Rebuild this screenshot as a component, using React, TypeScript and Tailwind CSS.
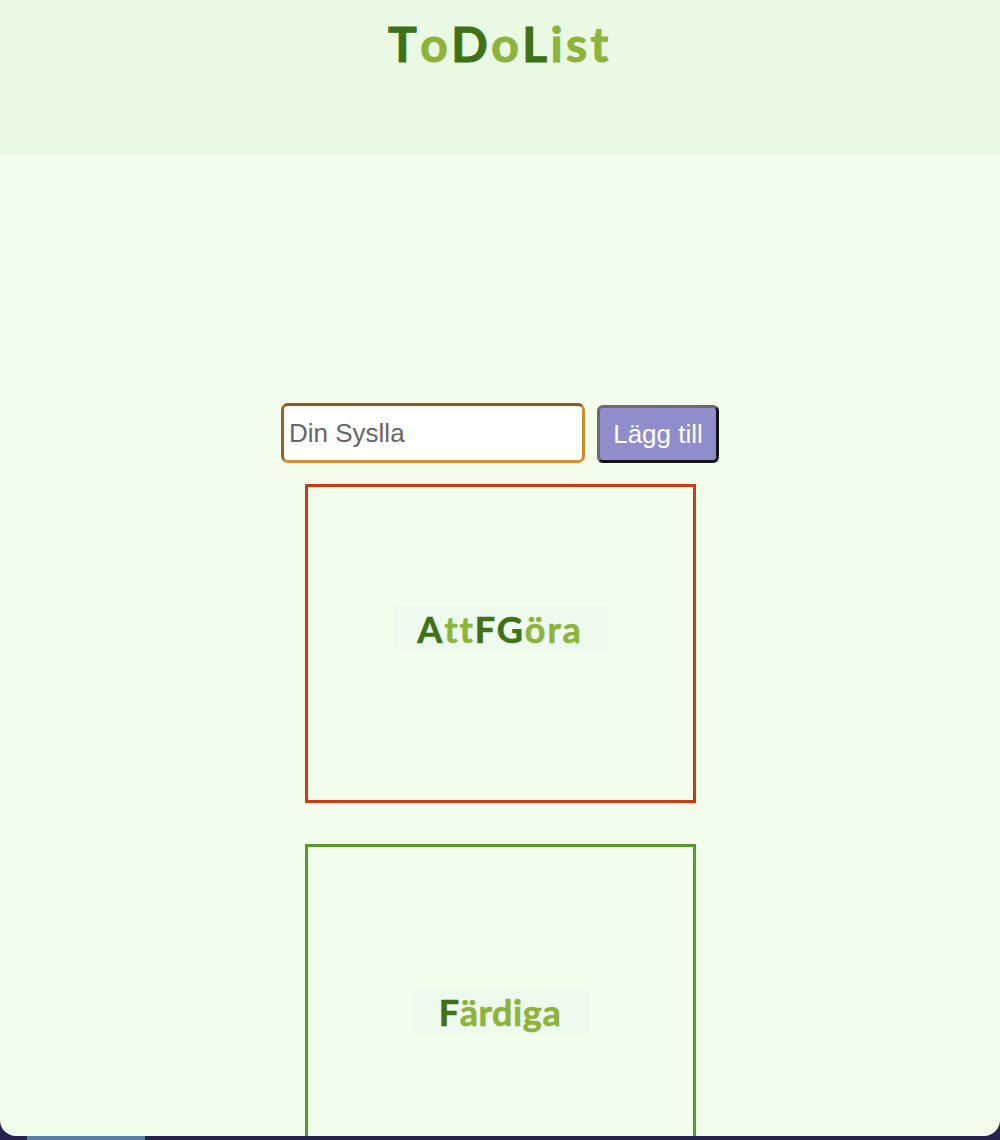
import React from "react";

const dark = "text-[#3f7217]";
const light = "text-[#8db43a]";

function Section({ border, children, boxW, h, pt, track }: { border: string; children: React.ReactNode; boxW: string; h: string; pt: string; track: string }) {
  return (
    <div className={`w-[391px] ${h} ${pt} border-[3px] ${border} flex justify-center shrink-0`}>
      <h2 className={`${boxW} h-[44px] bg-[#eefaee] flex items-center justify-center text-[36px] font-bold ${track} [-webkit-text-stroke:0.6px] font-['Lato',sans-serif]`}>
        {children}
      </h2>
    </div>
  );
}

export default function App() {
  return (
    <div className="w-[1000px] h-[1140px] bg-[#262350] relative overflow-hidden">
      <div className="h-[1136px] bg-[#f2fdeb] rounded-b-[16px] overflow-hidden flex flex-col">
        <header className="h-[154px] bg-[#e9f9e4] flex justify-center pt-[16px] shrink-0">
          <h1 className="text-[48px] font-bold leading-none tracking-[3.4px] [-webkit-text-stroke:1px] font-['Lato',sans-serif] h-[56px] flex items-center">
            <span className={dark}>T</span>
            <span className={light}>o</span>
            <span className={dark}>D</span>
            <span className={light}>o</span>
            <span className={dark}>L</span>
            <span className={light}>ist</span>
          </h1>
        </header>
        <main className="flex flex-col items-center pt-[249px] font-['Liberation_Sans',Arial,sans-serif]">
          <div className="flex items-end gap-[12px]">
            <input
              placeholder="Din Syslla"
              className="w-[304px] h-[60px] rounded-[7px] border-[3px] border-t-[#8a5a18] border-l-[#9a6420] border-r-[#d08a2c] border-b-[#d98f2c] bg-white px-[5px] text-[26px] text-[#555] placeholder:text-[#666] outline-none"
            />
            <button className="w-[122px] h-[58px] rounded-[6px] border-[3px] border-t-[#6b6b6b] border-l-[#6b6b6b] border-r-[#141414] border-b-[#141414] bg-[#908dcd] text-white text-[26px]">
              Lägg till
            </button>
          </div>
          <div className="mt-[21px] flex flex-col items-center gap-[41px]">
            <Section border="border-[#cc3b13]" boxW="w-[215px]" h="h-[319px]" pt="pt-[120px]" track="tracking-[1.9px]">
              <span className={dark}>A</span>
              <span className={light}>tt</span>
              <span className={dark}>FG</span>
              <span className={light}>öra</span>
            </Section>
            <Section border="border-[#5a9a2a]" boxW="w-[177px]" h="h-[360px]" pt="pt-[143px]" track="tracking-[0.6px]">
              <span className={dark}>F</span>
              <span className={light}>ärdiga</span>
            </Section>
          </div>
        </main>
      </div>
      <div className="absolute left-[27px] top-[1136px] w-[118px] h-[4px] bg-[#5b7fa6]" />
    </div>
  );
}
